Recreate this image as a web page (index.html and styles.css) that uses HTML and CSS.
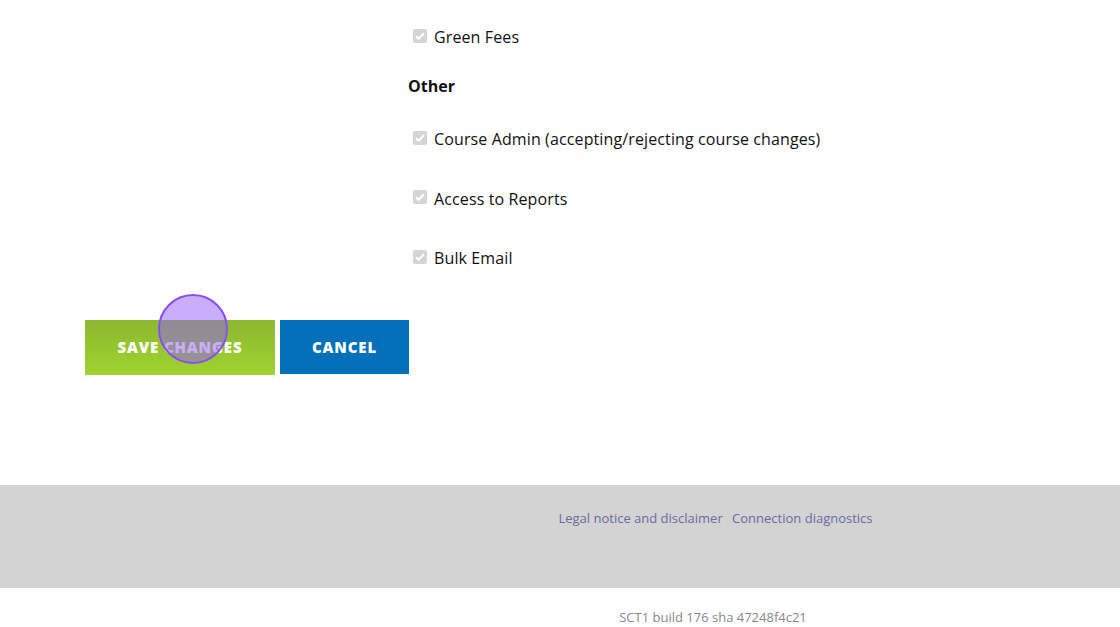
FILE: index.html
```html
<!DOCTYPE html>
<html lang="en">
<head>
    <meta charset="UTF-8">
    <meta name="viewport" content="width=device-width, initial-scale=1.0">
    <title>Edit Permissions</title>
    <link rel="stylesheet" href="styles.css">
</head>
<body>

<div class="form">
    <ul class="perm-list">
        <li class="perm">
            <span class="check"><svg width="14" height="14" viewBox="0 0 14 14"><path d="M3 7.2l2.6 2.6L11 4.2" fill="none" stroke="#fff" stroke-width="2"/></svg></span>
            Green Fees
        </li>
    </ul>

    <h3 class="group-title">Other</h3>

    <ul class="perm-list">
        <li class="perm">
            <span class="check"><svg width="14" height="14" viewBox="0 0 14 14"><path d="M3 7.2l2.6 2.6L11 4.2" fill="none" stroke="#fff" stroke-width="2"/></svg></span>
            Course Admin (accepting/rejecting course changes)
        </li>
        <li class="perm">
            <span class="check"><svg width="14" height="14" viewBox="0 0 14 14"><path d="M3 7.2l2.6 2.6L11 4.2" fill="none" stroke="#fff" stroke-width="2"/></svg></span>
            Access to Reports
        </li>
        <li class="perm">
            <span class="check"><svg width="14" height="14" viewBox="0 0 14 14"><path d="M3 7.2l2.6 2.6L11 4.2" fill="none" stroke="#fff" stroke-width="2"/></svg></span>
            Bulk Email
        </li>
    </ul>

    <div class="actions">
        <button class="btn btn-save">Save Changes</button>
        <button class="btn btn-cancel">Cancel</button>
        <span class="click-marker"></span>
    </div>
</div>

<footer>
    <div class="footer-links">
        <a href="#">Legal notice and disclaimer</a>
        <a href="#">Connection diagnostics</a>
    </div>
    <div class="build">SCT1 build 176 sha 47248f4c21</div>
</footer>

</body>
</html>
```

FILE: styles.css
```css
body {
    font-family: 'Open Sans', sans-serif;
    margin: 0;
    color: #111;
    background: #fff;
}

.form {
    height: 485px;
    padding-top: 25px;
    box-sizing: border-box;
}

.perm-list {
    list-style: none;
    margin: 0;
    padding: 0 0 0 413px;
}

.perm {
    display: flex;
    align-items: center;
    height: 24px;
    font-size: 16px;
    letter-spacing: 0.12px;
    margin-bottom: 35.5px;
}

.perm-list:first-child .perm {
    margin-bottom: 25px;
}

.check {
    display: inline-flex;
    width: 14px;
    height: 14px;
    margin-right: 7px;
    margin-top: -3px;
    background-color: #d5d5d5;
    border-radius: 2px;
}

.group-title {
    margin: 0 0 29px 408px;
    font-size: 16px;
    line-height: 24px;
    font-weight: 700;
}

/* botoes */
.actions {
    position: relative;
    display: flex;
    gap: 5px;
    margin: 50px 0 0 85px;
}

.btn {
    border: none;
    color: #fff;
    font-family: 'Open Sans', sans-serif;
    font-size: 15px;
    font-weight: 800;
    letter-spacing: 0.85px;
    text-transform: uppercase;
    height: 55px;
    padding-bottom: 2px;
    cursor: pointer;
}

.btn-save {
    width: 190px;
    background: linear-gradient(#8cb82f, #9fd32f);
}

.btn-cancel {
    width: 129px;
    height: 54px;
    background-color: #0570ba;
}

.click-marker {
    position: absolute;
    left: 73px;
    top: -26px;
    width: 66px;
    height: 66px;
    border-radius: 50%;
    border: 2px solid #8a4ef5;
    background-color: rgba(150, 92, 250, 0.5);
}

footer {
    font-size: 13px;
}

.footer-links {
    height: 103px;
    background-color: #d3d3d3;
    padding: 24px 0 0 311px;
    box-sizing: border-box;
    text-align: center;
}

.footer-links a {
    color: #6a6aa2;
    text-decoration: none;
    margin: 0 3px;
}

.build {
    padding: 20px 0 0 306px;
    text-align: center;
    color: #888;
}
```
